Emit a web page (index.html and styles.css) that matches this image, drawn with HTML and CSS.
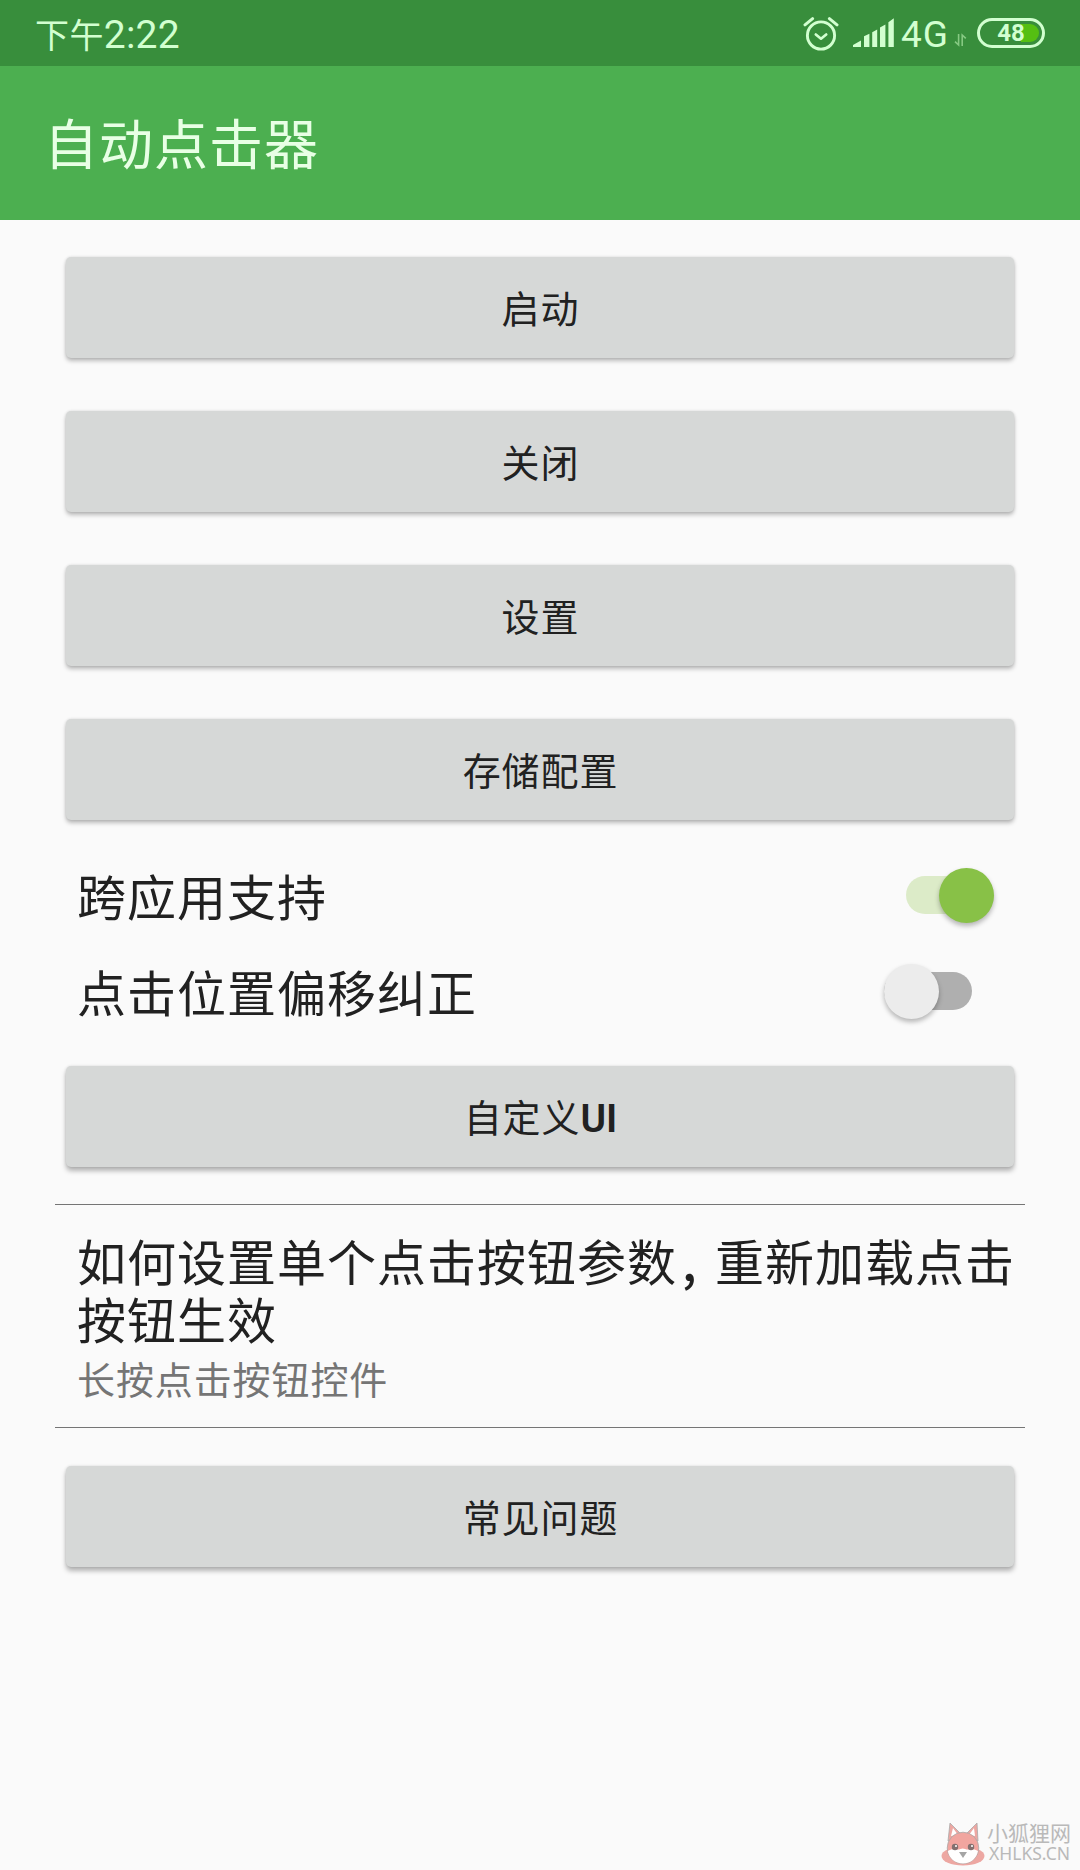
FILE: index.html
```html
<!DOCTYPE html>
<html lang="zh-CN">
<head>
  <meta charset="UTF-8" />
  <meta name="viewport" content="width=device-width, initial-scale=1.0"/>
  <title>自动点击器</title>
  <link rel="stylesheet" href="styles.css">
</head>
<body>
  <div class="status-bar">
    <div class="time">下午<span class="digits">2:22</span></div>
    <div class="status-icons">
      <svg class="alarm" width="36" height="36" viewBox="0 0 36 36" fill="none" stroke="#d2ffd0" stroke-linecap="round" stroke-linejoin="round">
        <circle cx="18" cy="19.5" r="13.6" stroke-width="2.9"/>
        <path d="M12.8 18.5l5.2 4.2 5.2-4.2" stroke-width="2.7"/>
        <path d="M2 8.8l7.6-6.2M34 8.8l-7.6-6.2" stroke-width="3"/>
      </svg>
      <svg class="signal" width="41" height="30" viewBox="0 0 41 30" fill="#d2ffd0">
        <path d="M0 29v-2l8-4.500v6.500zM11 29V18.300l5.400-2.600V29zM19.200 29V14.300l5-2.700V29zM27 29V9.500l5.400-3.100V29zM35.400 29V4.300l5.400-4.100V29z"/>
      </svg>
      <span class="network">4G</span>
      <svg class="data" width="13" height="14" viewBox="0 0 13 14" fill="none" stroke="#86c982" stroke-width="1.6">
        <path d="M4.6 1v11L1 8.6M8.2 13V2l3.6 3.4"/>
      </svg>
      <div class="battery"><span class="level"></span><span class="percent">48</span></div>
    </div>
  </div>

  <div class="app-bar">
    <h1>自动点击器</h1>
  </div>

  <div class="content">
    <div class="buttons">
      <button>启动</button>
      <button>关闭</button>
      <button>设置</button>
      <button>存储配置</button>
    </div>

    <div class="options">
      <div class="option">
        <span>跨应用支持</span>
        <div class="switch on"><div class="track"></div><div class="thumb"></div></div>
      </div>
      <div class="option">
        <span>点击位置偏移纠正</span>
        <div class="switch off"><div class="track"></div><div class="thumb"></div></div>
      </div>
    </div>

    <button class="raised">自定义<b>UI</b></button>

    <div class="help">
      <h2>如何设置单个点击按钮参数<span class="comma">,</span>重新加载点击<br>按钮生效</h2>
      <p>长按点击按钮控件</p>
    </div>

    <button class="raised">常见问题</button>
  </div>

  <div class="watermark">
    <svg width="44" height="44" viewBox="0 0 44 44">
      <ellipse cx="22" cy="34" rx="21.5" ry="9.5" fill="#eda7a2"/>
      <path d="M7 19L9 1l11 11zM37 19L36 1 25 12z" fill="#eda7a2" stroke="#aaa" stroke-width="0.8"/>
      <path d="M10 14l2-8 5 7zM34 14l-1-8-5 7z" fill="#fff"/>
      <circle cx="22" cy="26" r="15.8" fill="#f1a59f" stroke="#aaa" stroke-width="0.8"/>
      <path d="M6.8 29c3-2 5-2 8-1.500 4 .5 5-1 7-1s3 1.500 7 1c3-.5 5-.5 8.200 1.500-1.200 7-7 12.600-15 12.600S8 36 6.800 29z" fill="#fff"/>
      <circle cx="14" cy="25" r="3.2" fill="#83706f"/>
      <circle cx="30" cy="25" r="3.2" fill="#83706f"/>
      <circle cx="15" cy="24" r="1" fill="#fff"/>
      <circle cx="31" cy="24" r="1" fill="#fff"/>
      <path d="M18 30h8l-4 6z" fill="#a5a5a5"/>
    </svg>
    <div class="site">
      <span class="site-name">小狐狸网</span>
      <span class="site-url">XHLKS.CN</span>
    </div>
  </div>
</body>
</html>
```
FILE: styles.css
```css
* {
  box-sizing: border-box;
}
body {
  margin: 0;
  height: 1870px;
  position: relative;
  overflow: hidden;
  background: #fafafa;
  color: #212121;
  font-family: "Noto Sans CJK SC", sans-serif;
}
h1, h2, p {
  margin: 0;
  font-weight: 400;
}
.status-bar {
  display: flex;
  justify-content: space-between;
  height: 66px;
  padding: 0 35px;
  background: #388e3c;
  color: #d2ffd0;
}
.time {
  font-size: 34px;
  letter-spacing: 0.4px;
  line-height: 67px;
}
.digits {
  font-family: Roboto, sans-serif;
  font-size: 39px;
  letter-spacing: 0.2px;
}
.status-icons {
  display: flex;
  align-items: flex-start;
}
.alarm {
  margin: 16px -1px 0 0;
}
.signal {
  margin: 18px 0 0 15px;
}
.network {
  width: 52px;
  margin-left: 7px;
  font-family: Roboto, sans-serif;
  font-size: 37px;
  letter-spacing: 1px;
  line-height: 70px;
}
.data {
  margin: 33px 0 0 1px;
}
.battery {
  position: relative;
  width: 68px;
  height: 30px;
  margin: 18px 0 0 10px;
  border: 3px solid #d2ffd0;
  border-radius: 15px;
  text-align: center;
}
.level {
  position: absolute;
  top: 3px;
  right: 3px;
  width: 18px;
  height: 18px;
  border-radius: 0 9px 9px 0;
  background: #55bf12;
}
.percent {
  position: relative;
  display: block;
  font: 700 24px/25px Roboto, sans-serif;
}
.app-bar {
  display: flex;
  align-items: center;
  height: 154px;
  padding: 0 0 2px 44px;
  background: #4caf50;
  color: #e8ffe5;
}
h1 {
  font-size: 54px;
  letter-spacing: 1px;
  line-height: 80px;
}
.content {
  padding: 37px 55px 0;
}
.buttons {
  display: grid;
  gap: 53px;
}
button {
  display: block;
  width: 948px;
  height: 101px;
  margin: 0 11px;
  padding: 0 0 3px 1px;
  border: none;
  border-radius: 5px;
  background: #d6d8d7;
  box-shadow: 0 3px 4px rgba(0, 0, 0, 0.25), 0 0 3px rgba(0, 0, 0, 0.12);
  color: #212121;
  font-family: inherit;
  font-size: 38px;
  letter-spacing: 0.9px;
}
button.raised {
  box-shadow: 0 4px 5px rgba(0, 0, 0, 0.28), 0 0 3px rgba(0, 0, 0, 0.12);
}
button b {
  font-family: Roboto, sans-serif;
  font-weight: 600;
  font-size: 39px;
  letter-spacing: 0;
}
.options {
  padding: 27px 0 27px 22px;
}
.option {
  display: flex;
  align-items: center;
  justify-content: space-between;
  height: 96px;
  font-size: 49px;
  letter-spacing: 1px;
}
.option span {
  padding-bottom: 2px;
}
.switch {
  display: grid;
  align-items: center;
  width: 88px;
}
.track, .thumb {
  grid-area: 1 / 1;
}
.track {
  height: 38px;
  border-radius: 19px;
}
.thumb {
  width: 55px;
  height: 55px;
  border-radius: 50%;
  box-shadow: 0 3px 5px rgba(0, 0, 0, 0.28);
}
.on {
  margin-right: 31px;
}
.on .track {
  background: #dcebc8;
}
.on .thumb {
  justify-self: end;
  background: #88c147;
}
.off {
  margin-right: 53px;
}
.off .track {
  background: #afafaf;
}
.off .thumb {
  background: #ececec;
}
.help {
  height: 224px;
  margin: 37px 0 38px;
  padding: 26px 0 0 22px;
  border-top: 1px solid #757575;
  border-bottom: 1px solid #757575;
}
h2 {
  font-size: 49px;
  letter-spacing: 1px;
  line-height: 58px;
  white-space: nowrap;
}
.comma {
  display: inline-block;
  width: 38px;
  padding-left: 5px;
  font-weight: 500;
}
.help p {
  color: #757575;
  font-size: 38px;
  letter-spacing: 0.9px;
  line-height: 61px;
}
.watermark {
  position: absolute;
  right: 8px;
  bottom: 4px;
  display: flex;
  align-items: center;
  color: #b9b9b9;
}
.site {
  width: 85px;
  margin-left: 2px;
}
.site span {
  display: block;
  white-space: nowrap;
}
.site-name {
  font-size: 21px;
  line-height: 19px;
}
.site-url {
  padding-left: 2px;
  font-family: "Noto Sans", sans-serif;
  font-size: 17.5px;
  line-height: 23px;
}
```
